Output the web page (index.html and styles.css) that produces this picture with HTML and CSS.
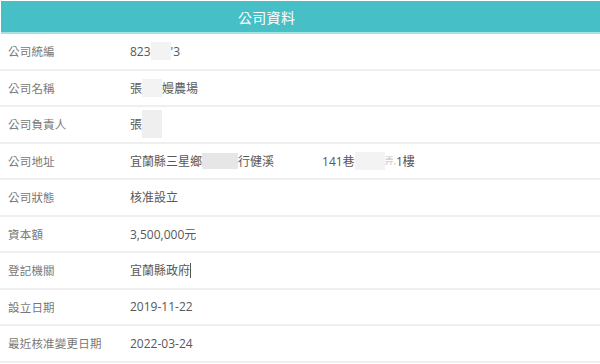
FILE: index.html
```html
<!DOCTYPE html>
<html lang="zh-Hant">
<head>
<meta charset="utf-8">
<title>公司資料</title>
<link rel="stylesheet" href="styles.css">
</head>
<body>
<div class="panel">
  <div class="head"><span class="head-title">公司資料</span></div>
  <div class="row"><div class="label">公司統編</div><div class="value">823<span class="blur w20"></span>'3</div></div>
  <div class="row"><div class="label">公司名稱</div><div class="value">張<span class="blur w20"></span>嫚農場</div></div>
  <div class="row"><div class="label">公司負責人</div><div class="value">張<span class="blur w20 tall"></span></div></div>
  <div class="row"><div class="label">公司地址</div><div class="value">宜蘭縣三星鄉<span class="blur w36 dark"></span>行健溪<span class="gap w48"></span>141巷<span class="blur w30"></span><span class="faint">弄,</span>1樓</div></div>
  <div class="row"><div class="label">公司狀態</div><div class="value">核准設立</div></div>
  <div class="row"><div class="label">資本額</div><div class="value">3,500,000元</div></div>
  <div class="row"><div class="label">登記機關</div><div class="value">宜蘭縣政府<span class="caret"></span></div></div>
  <div class="row"><div class="label">設立日期</div><div class="value">2019-11-22</div></div>
  <div class="row"><div class="label">最近核准變更日期</div><div class="value">2022-03-24</div></div>
</div>
</body>
</html>
```
FILE: styles.css
```css
html, body {
  margin: 0;
  padding: 0;
  background: #ffffff;
}
body {
  font-family: "Open Sans", "Noto Sans CJK TC", sans-serif;
  overflow: hidden;
}
.panel {
  padding: 1px 0 0 1px;
}
.head {
  height: 31px;
  background: #47bfc6;
  border-bottom: 2px solid #a6e1e4;
  display: flex;
  align-items: center;
  padding-left: 237px;
}
.head-title {
  color: #ffffff;
  font-size: 14px;
  font-family: "Noto Sans CJK TC", sans-serif;
  letter-spacing: 0.3px;
}
.row {
  display: flex;
  align-items: center;
  height: 34.5px;
  border-bottom: 2px solid #efefef;
  margin-left: -1px;
}
.label {
  width: 122px;
  padding-left: 8px;
  color: #777777;
  font-size: 11.5px;
  font-family: "Noto Sans CJK TC", sans-serif;
  letter-spacing: 0.2px;
}
.value {
  color: #585858;
  font-size: 12px;
  display: flex;
  align-items: center;
  white-space: nowrap;
}
.blur {
  display: inline-block;
  height: 18px;
  background: #f3f3f3;
}
.blur.dark {
  background: #e6e6e6;
  height: 16px;
}
.blur.tall {
  height: 28px;
  background: #efefef;
}
.gap { display: inline-block; }
.w20 { width: 20px; }
.w30 { width: 30px; }
.w36 { width: 36px; }
.w48 { width: 48px; }
.faint {
  color: #c0c0c0;
  font-size: 9px;
}
.caret {
  display: inline-block;
  width: 1px;
  height: 15px;
  background: #555555;
}
```
